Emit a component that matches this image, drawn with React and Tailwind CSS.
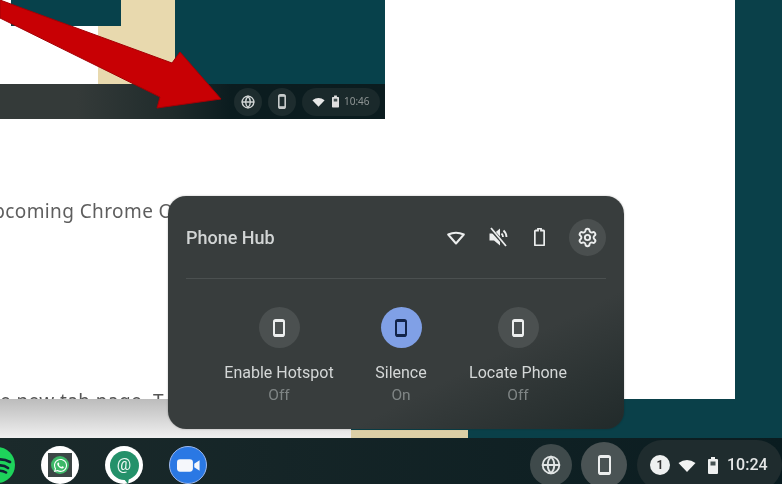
import React from "react";
import { Globe, Settings } from "lucide-react";
import { FaWhatsapp } from "react-icons/fa";

const Phone = ({ className = "", w = 12, h = 18, color = "currentColor", sw = 2 }) => (
  <svg width={w} height={h} viewBox={`0 0 ${w} ${h}`} className={className}>
    <rect x={sw / 2} y={sw / 2} width={w - sw} height={h - sw} rx="1.8" fill="none" stroke={color} strokeWidth={sw} />
    <rect x={sw / 2} y={sw / 2} width={w - sw} height="2" fill={color} />
    <rect x={sw / 2} y={h - sw / 2 - 2} width={w - sw} height="2" fill={color} />
  </svg>
);

const WifiSolid = ({ w = 18, h = 13, color = "currentColor" }) => (
  <svg width={w} height={h} viewBox="0 0 18 13">
    <path d="M0.5 4 Q9 -2 17.5 4 L9 13 Z" fill={color} />
  </svg>
);

const BatterySolid = ({ w = 10, h = 17, color = "currentColor" }) => (
  <svg width={w} height={h} viewBox="0 0 10 17">
    <path d="M3 0h4v2h2a1 1 0 0 1 1 1v13a1 1 0 0 1-1 1H1a1 1 0 0 1-1-1V3a1 1 0 0 1 1-1h2z" fill={color} />
    <rect x="2.5" y="4.5" width="5" height="4" fill="#1c2a2c" opacity="0.8" />
  </svg>
);

function ActionButton({ label, state, active }) {
  return (
    <div className="flex w-[130px] flex-col items-center">
      <div className={`flex h-[41px] w-[41px] items-center justify-center rounded-full ${active ? "bg-[#80a0e6]" : "bg-[#4b5050]"}`}>
        <Phone color={active ? "#12244a" : "#eceeee"} />
      </div>
      <div className="mt-[15px] whitespace-nowrap text-[16px] leading-[20px] text-[#d4d7d7]">{label}</div>
      <div className="mt-[2px] text-[15.5px] leading-[20px] text-[#7f8585]">{state}</div>
    </div>
  );
}

function Arrow() {
  return (
    <svg className="absolute left-0 top-0" width="225" height="112" viewBox="0 0 225 112">
      <polygon points="0,0 172,63 180,52 221,99 157,108 160,97 0,18" fill="#c80004" stroke="#a30005" strokeWidth="1" strokeLinejoin="round" />
    </svg>
  );
}

function MiniShot() {
  return (
    <div className="relative flex h-[119px] w-[385px] flex-col">
      <div className="flex h-[84px]">
        <div className="w-[98px] bg-white" />
        <div className="w-[77px] bg-[#e8d9ae]" />
        <div className="flex-1 bg-[#07414b]" />
      </div>
      <div className="absolute left-[11px] top-0 h-[26px] w-[110px] bg-[#07414b]" />
      <div className="flex h-[35px] items-center justify-end gap-[6px] bg-gradient-to-r from-[#343a39] from-20% via-[#1f2b2b] via-45% to-[#0b1c1f] to-60% pr-[5px]">
        <div className="flex h-[28px] w-[28px] items-center justify-center rounded-full bg-[#1d2c2e] text-[#d0d4d4]">
          <Globe size={14} strokeWidth={2.4} />
        </div>
        <div className="flex h-[28px] w-[28px] items-center justify-center rounded-full bg-[#1d2c2e]">
          <Phone w={8} h={15} sw={1.6} color="#c8cccc" />
        </div>
        <div className="flex h-[28px] w-[78px] items-center rounded-full bg-[#1a292b] pl-[10px] text-[10px] text-[#8f9595]">
          <WifiSolid w={13} h={10} color="#e8e8e8" />
          <span className="ml-[7px] flex"><BatterySolid w={7} h={13} color="#e0e0e0" /></span>
          <span className="ml-[5px]">10:46</span>
        </div>
      </div>
      <Arrow />
    </div>
  );
}

function Panel() {
  return (
    <div className="absolute left-[168px] top-[196px] h-[233px] w-[456px] rounded-[18px] bg-gradient-to-br from-[#383d3d] from-70% to-[#212a2a] px-[18px] shadow-[0_0_2px_rgba(0,0,0,0.3)]" style={{ fontFamily: "Roboto, sans-serif" }}>
      <div className="flex h-[83px] items-center border-b border-[#4b5050]">
        <div className="mt-[1px] text-[18px] font-medium text-[#d2d5d5]">Phone Hub</div>
        <div className="ml-auto flex items-center text-[#dfe1e1]">
          <svg width="18" height="15" viewBox="0 0 18 15" className="mr-[23px]">
            <path d="M1.200 4.500 Q9 0.800 16.800 4.500 L9 13.500 Z" fill="none" stroke="#eceeee" strokeWidth="2" strokeLinejoin="round" />
          </svg>
          <svg width="20" height="20" viewBox="0 0 20 20" className="mr-[26px]">
            <path d="M1.500 6.500h4.500l6-5v17l-6-5H1.500z" fill="#eceeee" />
            <path d="M13.500 6.500a5 5 0 0 1 1.500 3.500M15.500 3.500a9 9 0 0 1 3 6.500" fill="none" stroke="#eceeee" strokeWidth="1.800" />
            <path d="M2 1l16 18" stroke="#383d3d" strokeWidth="3.500" />
            <path d="M3 1l15 18" stroke="#eceeee" strokeWidth="1.800" />
          </svg>
          <svg width="11" height="18" viewBox="0 0 11 18" className="mr-[24px]">
            <path d="M4 0.500h3v2h2.200a1 1 0 0 1 1 1V16.500a1 1 0 0 1-1 1H1.800a1 1 0 0 1-1-1V3.500a1 1 0 0 1 1-1H4z" fill="none" stroke="#eceeee" strokeWidth="1.800" />
          </svg>
          <div className="flex h-[37px] w-[37px] items-center justify-center rounded-full bg-[#4a4f4f]">
            <Settings size={21} strokeWidth={2.2} color="#eceeee" />
          </div>
        </div>
      </div>
      <div className="mt-[28px] flex pl-[28px]">
        <ActionButton label="Enable Hotspot" state="Off" />
        <div className="-ml-[8px]"><ActionButton label="Silence" state="On" active /></div>
        <div className="-ml-[13px]"><ActionButton label="Locate Phone" state="Off" /></div>
      </div>
    </div>
  );
}

function Shelf() {
  return (
    <div className="flex h-[46px] items-center bg-gradient-to-r from-[#1b2a2b] to-[#0a1c20] pt-[8px]" style={{ fontFamily: "Roboto, sans-serif" }}>
      <div className="-ml-[21px] flex h-[36px] w-[36px] shrink-0 items-center justify-center rounded-full bg-[#1ed35b]">
        <svg width="36" height="36" viewBox="0 0 36 36">
          <path d="M16 13q8-2 15 2M17 19q7-2 12 2M18 24q5-1 9 1.500" fill="none" stroke="#123" strokeWidth="2.600" strokeLinecap="round" />
        </svg>
      </div>
      <div className="ml-[26px] flex h-[38px] w-[38px] shrink-0 items-center justify-center rounded-full bg-white">
        <div className="flex h-[24px] w-[24px] items-center justify-center bg-[#3c4646]">
          <div className="flex h-[18px] w-[18px] items-center justify-center rounded-full bg-[#3db868] text-white">
            <FaWhatsapp size={15} />
          </div>
        </div>
      </div>
      <div className="ml-[26px] flex h-[38px] w-[38px] shrink-0 items-center justify-center rounded-full bg-white">
        <div className="relative flex h-[29px] w-[29px] items-center justify-center rounded-full bg-[#24916a] text-[16px] leading-none text-[#eef8f3]">
          @
          <div className="absolute -bottom-[4px] left-[13px] h-0 w-0 border-l-[5px] border-r-[1px] border-t-[6px] border-l-transparent border-r-transparent border-t-[#24916a]" />
        </div>
      </div>
      <div className="ml-[26px] flex h-[38px] w-[38px] shrink-0 items-center justify-center rounded-full border border-[#9db9ee] bg-[#2a78e4]">
        <svg width="23" height="13" viewBox="0 0 26 14">
          <rect x="0" y="0" width="18" height="14" rx="3.500" fill="#f5f7fb" />
          <path d="M19.500 5L25.500 1v12l-6-4z" fill="#f5f7fb" />
        </svg>
      </div>
      <div className="ml-auto flex items-center">
        <div className="flex h-[42px] w-[42px] items-center justify-center rounded-full bg-[#3f4a4b] text-[#e0e4e4]">
          <Globe size={20} strokeWidth={2.2} />
        </div>
        <div className="ml-[9px] flex h-[46px] w-[46px] items-center justify-center rounded-full bg-[#4a5354]">
          <Phone w={13} h={20} color="#eceeee" />
        </div>
        <div className="ml-[10px] flex h-[50px] w-[145px] items-center rounded-[25px] bg-[#1f2c2e] pl-[13px] text-[#e4e6e6]">
          <div className="flex h-[20px] w-[20px] items-center justify-center rounded-full bg-[#eef0f0] text-[12px] font-bold text-[#333]">1</div>
          <span className="ml-[8px] flex"><WifiSolid color="#f2f3f3" /></span>
          <span className="ml-[12px] flex"><BatterySolid color="#eef0f0" /></span>
          <span className="ml-[9px] text-[16px] font-medium">10:24</span>
        </div>
      </div>
    </div>
  );
}

export default function App() {
  return (
    <div className="relative flex h-[484px] w-[782px] flex-col overflow-hidden bg-[#0a4049] blur-[0.6px]">
      <div className="flex h-[399px]">
        <div className="w-[735px] overflow-hidden bg-white">
          <MiniShot />
          <div className="mt-[81px] -ml-[19px] whitespace-nowrap text-[19px] leading-[22px] tracking-[0.4px] text-[#5e5e5e]" style={{ fontFamily: "'Noto Sans', sans-serif" }}>
            upcoming Chrome OS
          </div>
          <div className="mt-[168px] whitespace-nowrap text-[19px] leading-[22px] tracking-[0.4px] text-[#555]" style={{ fontFamily: "'Noto Sans', sans-serif" }}>
            e new tab page. T
          </div>
        </div>
      </div>
      <div className="flex h-[39px]">
        <div className="w-[351px] bg-gradient-to-b from-[#bcbcbc] to-[#f0f0f0]" />
        <div className="flex w-[117px] flex-col justify-end">
          <div className="h-[8px] bg-[#dccfa6]" />
        </div>
      </div>
      <Shelf />
      <Panel />
    </div>
  );
}
